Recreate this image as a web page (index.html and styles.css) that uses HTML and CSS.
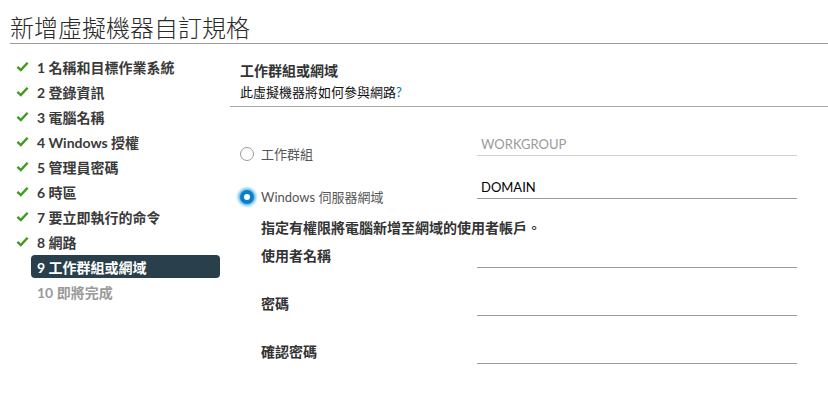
FILE: index.html
```html
<!DOCTYPE html>
<html lang="zh-Hant">
<head>
<meta charset="utf-8">
<title>新增虛擬機器自訂規格</title>
<link rel="stylesheet" href="styles.css">
</head>
<body>
<header class="page-head">
  <h1 class="page-title">新增虛擬機器自訂規格</h1>
</header>
<div class="wizard">
  <nav class="steps">
    <ul class="step-list">
      <li class="step done"><svg class="check" viewBox="0 0 14 14"><path d="M1.5 7.5 L5.2 10.8 L12.5 3"/></svg><span class="step-label">1 名稱和目標作業系統</span></li>
      <li class="step done"><svg class="check" viewBox="0 0 14 14"><path d="M1.5 7.5 L5.2 10.8 L12.5 3"/></svg><span class="step-label">2 登錄資訊</span></li>
      <li class="step done"><svg class="check" viewBox="0 0 14 14"><path d="M1.5 7.5 L5.2 10.8 L12.5 3"/></svg><span class="step-label">3 電腦名稱</span></li>
      <li class="step done"><svg class="check" viewBox="0 0 14 14"><path d="M1.5 7.5 L5.2 10.8 L12.5 3"/></svg><span class="step-label">4 Windows 授權</span></li>
      <li class="step done"><svg class="check" viewBox="0 0 14 14"><path d="M1.5 7.5 L5.2 10.8 L12.5 3"/></svg><span class="step-label">5 管理員密碼</span></li>
      <li class="step done"><svg class="check" viewBox="0 0 14 14"><path d="M1.5 7.5 L5.2 10.8 L12.5 3"/></svg><span class="step-label">6 時區</span></li>
      <li class="step done"><svg class="check" viewBox="0 0 14 14"><path d="M1.5 7.5 L5.2 10.8 L12.5 3"/></svg><span class="step-label">7 要立即執行的命令</span></li>
      <li class="step done"><svg class="check" viewBox="0 0 14 14"><path d="M1.5 7.5 L5.2 10.8 L12.5 3"/></svg><span class="step-label">8 網路</span></li>
      <li class="step active"><span class="icon-space"></span><span class="step-label">9 工作群組或網域</span></li>
      <li class="step pending"><span class="icon-space"></span><span class="step-label">10 即將完成</span></li>
    </ul>
  </nav>
  <main class="content">
    <div class="section-head">
      <h2 class="section-title">工作群組或網域</h2>
      <p class="section-sub">此虛擬機器將如何參與網路<span class="help">?</span></p>
    </div>
    <div class="form">
      <div class="choice-row">
        <label class="radio-label"><span class="radio"></span>工作群組</label>
        <input class="field field-disabled" type="text" value="WORKGROUP" disabled>
      </div>
      <div class="choice-row">
        <label class="radio-label"><span class="radio checked"></span>Windows 伺服器網域</label>
        <input class="field field-active" type="text" value="DOMAIN">
      </div>
      <p class="instruction">指定有權限將電腦新增至網域的使用者帳戶。</p>
      <div class="cred-row">
        <span class="cred-label">使用者名稱</span>
        <input class="field field-cred" type="text">
      </div>
      <div class="cred-row">
        <span class="cred-label">密碼</span>
        <input class="field field-cred" type="password">
      </div>
      <div class="cred-row">
        <span class="cred-label">確認密碼</span>
        <input class="field field-cred" type="password">
      </div>
    </div>
  </main>
</div>
</body>
</html>
```
FILE: styles.css
```css
* { box-sizing: border-box; }

html, body {
  margin: 0;
  padding: 0;
  background: #fff;
}

body {
  font-family: "Lato", "Noto Sans CJK TC", sans-serif;
  color: #333;
  width: 828px;
  height: 398px;
  overflow: hidden;
}

.page-head {
  margin-left: 10px;
  border-bottom: 1px solid #9a9a9a;
  height: 44px;
  padding-top: 12px;
}

.page-title {
  margin: 0;
  font-size: 24px;
  line-height: 30px;
  font-weight: 300;
  color: #2a2a2a;
  font-family: "Noto Sans CJK TC", sans-serif;
}

.wizard {
  display: flex;
}

.steps {
  width: 230px;
  flex: none;
  padding-top: 10px;
}

.step-list {
  list-style: none;
  margin: 0;
  padding: 0 0 0 16px;
}

.step {
  display: flex;
  align-items: center;
  height: 25px;
}

.check {
  width: 13px;
  height: 13px;
  margin-right: 2px;
  flex: none;
  fill: none;
  stroke: #3f9b1f;
  stroke-width: 2.6;
}

.icon-space {
  width: 15px;
  flex: none;
}

.step-label {
  display: flex;
  align-items: center;
  height: 23px;
  width: 189px;
  padding-left: 6px;
  font-size: 14px;
  font-weight: 700;
  color: #3a3a3a;
  border-radius: 4px;
}

.step.active .step-label {
  background: #2a3f4c;
  color: #fff;
}

.step.pending .step-label {
  color: #9a9a9a;
}

.content {
  flex: 1;
}

.section-head {
  border-bottom: 1px solid #a8a8a8;
  padding: 17px 0 4px 10px;
  height: 63px;
}

.section-title {
  margin: 0;
  font-size: 14px;
  line-height: 20px;
  font-weight: 700;
  color: #333;
}

.section-sub {
  margin: 1px 0 0;
  font-size: 13px;
  line-height: 20px;
  color: #111;
}

.help {
  color: #0079b8;
}

.form {
  padding: 26px 0 0 10px;
}

.choice-row {
  display: grid;
  grid-template-columns: 237px 320px;
  align-items: start;
  height: 43px;
}

.radio-label {
  display: flex;
  align-items: center;
  gap: 7px;
  margin-top: 11px;
  font-size: 13px;
  line-height: 20px;
  color: #555;
}

.radio {
  width: 14px;
  height: 14px;
  border-radius: 50%;
  border: 1px solid #9a9a9a;
  background: #fff;
  flex: none;
}

.radio.checked {
  border: 4.5px solid #0a80c6;
  background: #fff;
  box-shadow: 0 0 3px 2px #5cb8ec;
}

.field {
  display: block;
  height: 23px;
  width: 320px;
  border: none;
  border-bottom: 1px solid #9a9a9a;
  padding: 0 4px;
  margin: 0;
  font-family: "Lato", sans-serif;
  font-size: 13px;
  line-height: 22px;
  background: transparent;
  outline: none;
}

.field-disabled {
  color: #9a9a9a;
  border-bottom-color: #cfcfcf;
  -webkit-text-fill-color: #9a9a9a;
  opacity: 1;
}

.field-active {
  color: #000;
}

.instruction {
  margin: 0 0 0 21px;
  font-size: 14px;
  font-weight: 700;
  line-height: 20px;
  height: 20px;
  color: #333;
  margin-top: -1px;
}

.cred-row {
  display: grid;
  grid-template-columns: 237px 320px;
  align-items: start;
  margin-top: 25px;
}

.instruction + .cred-row {
  margin-top: 7px;
}

.cred-label {
  padding-left: 21px;
  font-size: 14px;
  font-weight: 700;
  line-height: 20px;
  margin-top: 1px;
  color: #333;
}
```
